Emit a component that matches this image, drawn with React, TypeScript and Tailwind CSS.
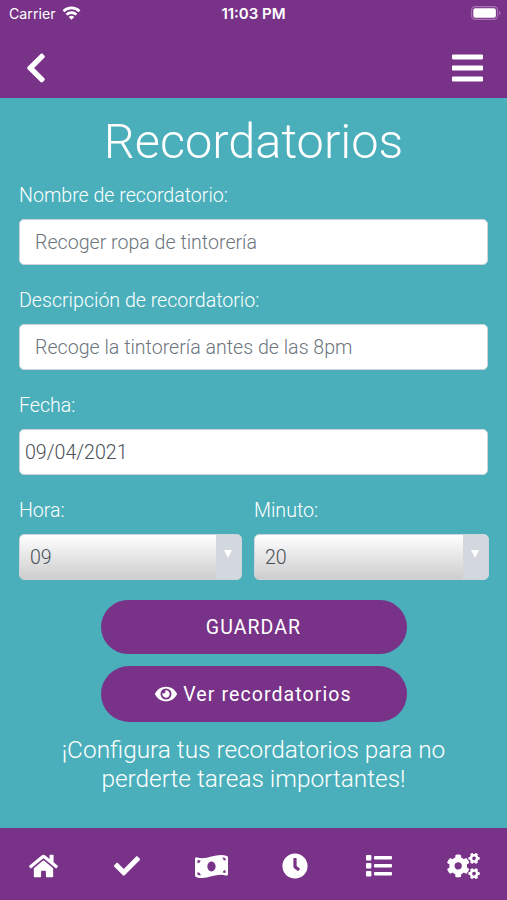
import { useState } from "react";
import {
  FaBars,
  FaCheck,
  FaChevronLeft,
  FaClock,
  FaCogs,
  FaEye,
  FaHome,
  FaMoneyBillWave,
} from "react-icons/fa";

const HOURS = ["08", "09", "10", "11"];
const MINUTES = ["00", "10", "20", "30"];

const TABS = [
  { label: "Inicio", icon: <FaHome className="h-[28px] w-[29px]" /> },
  { label: "Tareas", icon: <FaCheck className="h-[26px] w-[26px]" /> },
  { label: "Dinero", icon: <FaMoneyBillWave className="h-[27px] w-[33px]" /> },
  { label: "Recordatorios", icon: <FaClock className="h-[26px] w-[26px]" /> },
  { label: "Lista", icon: <ListIcon /> },
  { label: "Ajustes", icon: <FaCogs className="h-[26px] w-[33px]" /> },
];

function ListIcon() {
  return (
    <svg viewBox="0 0 26 22" className="h-[22px] w-[26px]" fill="currentColor">
      {[0, 8, 16].map((y) => (
        <g key={y}>
          <rect x="0" y={y} width="5.4" height="5.4" rx="1" />
          <rect x="8" y={y + 0.9} width="18" height="3.6" rx="0.9" />
        </g>
      ))}
    </svg>
  );
}

function WifiIcon() {
  return (
    <svg viewBox="0 0 18 14" className="-mt-px ml-[6px] h-[14px] w-[19px]" fill="none" stroke="currentColor" strokeWidth="2.6">
      <path d="M1 5.2a11.4 11.4 0 0 1 16 0" />
      <path d="M4 8.6a7.2 7.2 0 0 1 10 0" />
      <path d="M9 13.8 6.2 11a4 4 0 0 1 5.6 0Z" fill="currentColor" stroke="none" />
    </svg>
  );
}

function BatteryIcon() {
  return (
    <svg viewBox="0 0 30 14" className="-mt-[2px] h-[14px] w-[30px]">
      <rect x="0.6" y="0.6" width="26" height="12.8" rx="3.6" fill="none" stroke="#a673b3" strokeWidth="1.1" />
      <rect x="2.3" y="2.3" width="22.6" height="9.4" rx="2" fill="#fff" />
      <path d="M28 4.8c1.8.6 1.8 3.8 0 4.4Z" fill="#a673b3" />
    </svg>
  );
}

type TextFieldProps = { label: string; placeholder?: string; value?: string };

function TextField({ label, placeholder, value }: TextFieldProps) {
  return (
    <label className="mb-[19.6px] block">
      <span className="mb-[8.4px] block pt-px leading-[29.4px]">{label}</span>
      <input
        type="text"
        placeholder={placeholder}
        defaultValue={value}
        className={
          "block h-[46.6px] w-full rounded-[5px] border border-[#ced4da] bg-white pt-[2px] font-light text-[#495057] outline-none placeholder:text-[#6c757d] placeholder:opacity-100 " +
          (value ? "px-[5px]" : "px-[15px]")
        }
      />
    </label>
  );
}

type SelectFieldProps = {
  label: string;
  options: string[];
  value: string;
  onChange: (value: string) => void;
};

function SelectField({ label, options, value, onChange }: SelectFieldProps) {
  return (
    <label className="block">
      <span className="mb-[8.4px] block pt-px leading-[29.4px]">{label}</span>
      <span className="relative block overflow-hidden rounded-[5px] border border-[#ced4da]">
        <select
          value={value}
          onChange={(e) => onChange(e.target.value)}
          className="block h-[44.6px] w-full appearance-none bg-linear-to-b from-white to-[#cdcdcd] pt-[2px] pl-[10px] font-light text-[#495057] outline-none"
        >
          {options.map((o) => (
            <option key={o}>{o}</option>
          ))}
        </select>
        <span className="pointer-events-none absolute inset-y-0 right-0 flex w-[25px] items-center justify-center bg-[#d3d8de]">
          <svg viewBox="0 0 8 8" className="-mt-[5px] -ml-[2px] h-[8px] w-[8px]" fill="#fff">
            <path d="M0 0h8L4 8Z" />
          </svg>
        </span>
      </span>
    </label>
  );
}

export default function App() {
  const [hour, setHour] = useState("09");
  const [minute, setMinute] = useState("20");

  return (
    <div className="flex h-[900px] w-[507px] flex-col overflow-hidden bg-[#4aafbb] font-[Roboto,sans-serif] text-[19.6px] font-light text-white">
      {/* Header */}
      <header className="h-[98px] shrink-0 bg-[#783389]">
        <div className="grid h-[28px] grid-cols-3 items-center px-[6px] font-[Inter,sans-serif] text-[14.2px] font-normal">
          <div className="flex items-center pl-[3px]">
            Carrier
            <WifiIcon />
          </div>
          <div className="text-center text-[15px] font-semibold">11:03 PM</div>
          <div className="flex justify-end">
            <BatteryIcon />
          </div>
        </div>
        <div className="flex h-[79px] items-center justify-between pr-[24px] pl-[25px]">
          <button aria-label="Volver">
            <FaChevronLeft className="h-[34px] w-[22px]" />
          </button>
          <button aria-label="Menú">
            <FaBars className="h-[36px] w-[31px]" />
          </button>
        </div>
      </header>

      {/* Form */}
      <main className="flex-1 px-[19px] pt-[13.5px]">
        <h1 className="mb-[9.4px] text-center text-[48.7px] leading-[59px]">Recordatorios</h1>
        <TextField label="Nombre de recordatorio:" placeholder="Recoger ropa de tintorería" />
        <TextField label="Descripción de recordatorio:" placeholder="Recoge la tintorería antes de las 8pm" />
        <TextField label="Fecha:" value="09/04/2021" />
        <div className="grid grid-cols-[223px_235px] gap-x-[12px]">
          <SelectField label="Hora:" options={HOURS} value={hour} onChange={setHour} />
          <SelectField label="Minuto:" options={MINUTES} value={minute} onChange={setMinute} />
        </div>

        <div className="mt-[19.6px] flex flex-col items-center gap-3 text-[19.5px] font-normal tracking-[1.1px]">
          <button className="h-[54px] w-[306px] rounded-full bg-[#783389] pt-px">GUARDAR</button>
          <button className="flex h-[56px] w-[306px] items-center justify-center gap-[6px] rounded-full bg-[#783389] pt-px">
            <FaEye className="h-[22px] w-[22px]" />
            Ver recordatorios
          </button>
        </div>

        <p className="mt-[13px] text-center text-[24.4px] leading-[29.4px]">
          ¡Configura tus recordatorios para no
          <br />
          perderte tareas importantes!
        </p>
      </main>

      {/* Bottom tabs */}
      <nav className="grid h-[72px] shrink-0 grid-cols-6 bg-[#783389] pr-[2px] pl-px">
        {TABS.map((tab) => (
          <button key={tab.label} aria-label={tab.label} className="flex items-center justify-center pt-[4px]">
            {tab.icon}
          </button>
        ))}
      </nav>
    </div>
  );
}
